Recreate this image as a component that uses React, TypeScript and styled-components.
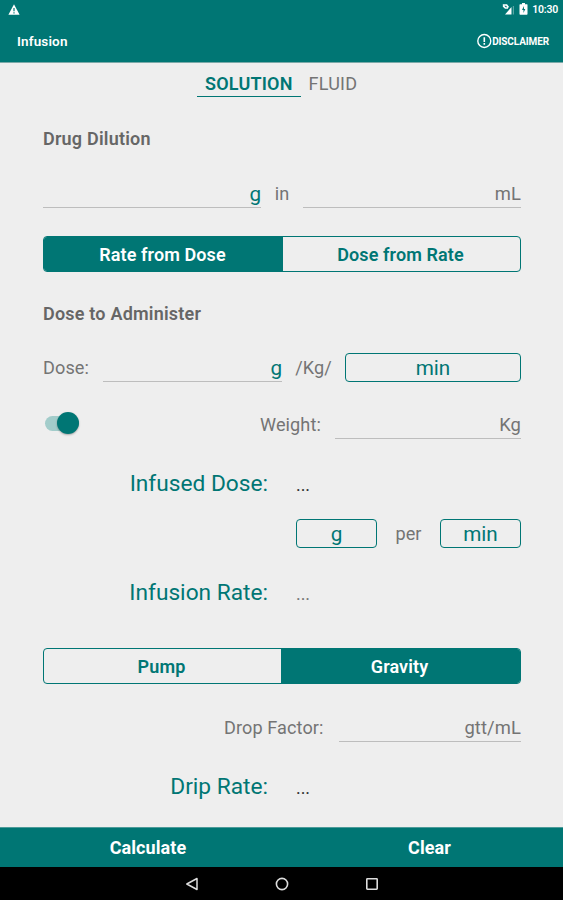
import React, { useState } from "react";
import styled, { createGlobalStyle } from "styled-components";

const TEAL = "#007674";
const GREY = "#747474";
const FONT = 'Roboto, "Liberation Sans", sans-serif';

const GlobalStyle = createGlobalStyle`
  * { box-sizing: border-box; }
  body { margin: 0; background: #eeeeee; font-family: ${FONT}; }
  button { font-family: inherit; padding: 0; margin: 0; cursor: pointer; }
`;

const Screen = styled.div`
  width: 563px;
  height: 900px;
  display: flex;
  flex-direction: column;
  background: #eeeeee;
  overflow: hidden;
  white-space: nowrap;
`;

const StatusBar = styled.div`
  height: 18px;
  flex: none;
  display: flex;
  align-items: center;
  background: ${TEAL};
  padding: 0 5px 0 8px;
  color: #fff;
`;

const StatusIcons = styled.div`
  display: flex;
  align-items: center;
  gap: 4px;
`;

const Clock = styled.span`
  font-size: 10.5px;
  font-weight: 600;
  line-height: 18px;
  margin: 2px 0 0 4px;
  letter-spacing: -0.2px;
`;

const Fill = styled.div`
  flex: 1;
`;

const AppBar = styled.header`
  height: 45px;
  flex: none;
  display: flex;
  align-items: center;
  background: ${TEAL};
  border-bottom: 1px solid #7aa9a8;
  padding: 2px 14px 0 17px;
  color: #fff;
`;

const Title = styled.h1`
  margin: 0;
  flex: 1;
  font-size: 13.5px;
  font-weight: 600;
  letter-spacing: 0.15px;
`;

const Disclaimer = styled.button`
  display: flex;
  align-items: center;
  border: 0;
  background: none;
  color: #fff;
  font-size: 10px;
  font-weight: 700;
  letter-spacing: -0.12px;
`;

const Tabs = styled.nav`
  height: 34px;
  flex: none;
  display: flex;
  padding-left: 197px;
`;

const Tab = styled.button<{ $active: boolean }>`
  border: 0;
  border-bottom: 1.5px solid ${(p) => (p.$active ? TEAL : "transparent")};
  background: none;
  padding: 9px 8px 0;
  font-size: 18px;
  line-height: 24px;
  font-weight: ${(p) => (p.$active ? 600 : 400)};
  letter-spacing: 0.2px;
  color: ${(p) => (p.$active ? TEAL : GREY)};
`;

const Form = styled.main`
  flex: 1;
  min-height: 0;
  padding: 0 42px 0 43px;
  display: flex;
  flex-direction: column;
`;

const Row = styled.div<{ $gap: number; $height?: number }>`
  display: flex;
  align-items: center;
  flex: none;
  height: ${(p) => p.$height ?? 29}px;
  margin-top: ${(p) => p.$gap}px;
`;

const Heading = styled.h2`
  margin: 0;
  font-size: 18px;
  font-weight: 600;
  letter-spacing: 0.2px;
  color: #666;
`;

const Label = styled.span<{ $width: number; $align?: string }>`
  width: ${(p) => p.$width}px;
  flex: none;
  font-size: 18.1px;
  line-height: 28px;
  letter-spacing: 0.1px;
  color: ${GREY};
  text-align: ${(p) => p.$align ?? "left"};
`;

const Field = styled.div<{ $width: number }>`
  width: ${(p) => p.$width}px;
  height: 100%;
  flex: none;
  display: flex;
  justify-content: flex-end;
  align-items: center;
  border-bottom: 1px solid #bdbdbd;
  font-size: 18.4px;
  letter-spacing: 0.1px;
  color: ${GREY};
`;

const UnitPick = styled.button`
  border: 0;
  background: none;
  font-size: 20.7px;
  line-height: 28px;
  padding-top: 2px;
  color: ${TEAL};
`;

const UnitBox = styled.button<{ $width: number }>`
  width: ${(p) => p.$width}px;
  height: 29px;
  flex: none;
  border: 1.3px solid ${TEAL};
  border-radius: 4px;
  background: none;
  padding-top: 1px;
  font-size: 20.7px;
  line-height: 24px;
  color: ${TEAL};
`;

const Segmented = styled.div<{ $gap: number; $first: number }>`
  height: 36px;
  flex: none;
  margin-top: ${(p) => p.$gap}px;
  display: grid;
  grid-template-columns: ${(p) => p.$first}px 1fr;
  border: 1px solid ${TEAL};
  border-radius: 4px;
  overflow: hidden;
`;

const Segment = styled.button<{ $on: boolean }>`
  border: 0;
  background: ${(p) => (p.$on ? TEAL : "transparent")};
  color: ${(p) => (p.$on ? "#fff" : TEAL)};
  font-size: 18px;
  font-weight: 600;
  letter-spacing: 0.1px;
  padding: 1px 2px 0 0;
`;

const SwitchTrack = styled.button<{ $on: boolean }>`
  width: 34px;
  height: 15px;
  flex: none;
  margin: -3px 0 0 2px;
  border: 0;
  border-radius: 8px;
  background: ${(p) => (p.$on ? "#a2ccca" : "#bbb")};
  display: flex;
  align-items: center;
  justify-content: ${(p) => (p.$on ? "flex-end" : "flex-start")};
`;

const SwitchThumb = styled.span`
  width: 22px;
  height: 22px;
  flex: none;
  border-radius: 50%;
  background: ${TEAL};
  box-shadow: 0 1px 2px rgba(0, 0, 0, 0.3);
`;

const ResultLabel = styled.span`
  width: 225px;
  flex: none;
  text-align: right;
  font-size: 22.7px;
  line-height: 30px;
  padding-top: 2px;
  color: ${TEAL};
`;

const ResultValue = styled.span<{ $soft?: boolean }>`
  margin-left: 28px;
  font-size: 18px;
  line-height: 30px;
  padding-top: 3px;
  letter-spacing: -0.1px;
  color: ${(p) => (p.$soft ? "#777" : "#333")};
`;

const Actions = styled.footer`
  height: 40px;
  flex: none;
  display: grid;
  grid-template-columns: 296px 1fr;
  background: ${TEAL};
  border-top: 1px solid #4d9b99;
`;

const Action = styled.button`
  border: 0;
  background: none;
  color: #fff;
  font-size: 18px;
  font-weight: 700;
  letter-spacing: 0.1px;
`;

const NavBar = styled.div`
  height: 33px;
  flex: none;
  display: flex;
  justify-content: center;
  align-items: center;
  gap: 76px;
  background: #000;
`;

const WarningIcon = () => (
  <svg width="12" height="11" viewBox="0 0 12 11">
    <path d="M6 0.3 L11.6 10.7 H0.4 Z" fill="#fff" />
    <path d="M6 4 V7.2 M6 8.2 V9.4" stroke={TEAL} strokeWidth="1.2" />
  </svg>
);

const SignalIcon = () => (
  <svg width="13" height="12" viewBox="0 0 13 12">
    <path d="M9.5 4 V11.5 H3 Z" fill="#fff" />
    <path d="M11.4 3 V11.5" stroke="#fff" strokeOpacity="0.35" strokeWidth="1.2" />
    <path d="M0.8 2 H4.6 L6.4 4.6 M1.2 2.8 L3.4 5 H6" stroke="#fff" strokeWidth="1.7" fill="none" />
  </svg>
);

const BatteryIcon = () => (
  <svg width="9" height="12" viewBox="0 0 9 12">
    <path d="M3 0 H6 V1.3 H8 Q8.5 1.3 8.5 2 V11 Q8.5 11.7 7.8 11.7 H1.2 Q0.5 11.7 0.5 11 V2 Q0.5 1.3 1 1.3 H3 Z" fill="#fff" />
    <path d="M5 3 L3 7 H4.5 V10 L6.3 6 H5 Z" fill={TEAL} />
  </svg>
);

const AlertIcon = () => (
  <svg width="15" height="16" viewBox="0 0 15 16">
    <circle cx="7.3" cy="8" r="6.5" fill="none" stroke="#fff" strokeWidth="1.4" />
    <path d="M7.3 4.2 V9 M7.3 10.1 V11.7" stroke="#fff" strokeWidth="1.6" />
  </svg>
);

const BackIcon = () => (
  <svg width="14" height="14" viewBox="0 0 14 14">
    <path d="M12 1.5 V12.5 L1.8 7 Z" fill="none" stroke="#ddd" strokeWidth="1.5" strokeLinejoin="round" />
  </svg>
);

const HomeIcon = () => (
  <svg width="14" height="14" viewBox="0 0 14 14">
    <circle cx="7" cy="7" r="5.6" fill="none" stroke="#ddd" strokeWidth="1.6" />
  </svg>
);

const RecentIcon = () => (
  <svg width="14" height="14" viewBox="0 0 14 14">
    <rect x="1.8" y="1.8" width="10.4" height="10.4" rx="0.6" fill="none" stroke="#ddd" strokeWidth="1.6" />
  </svg>
);

export default function App() {
  const [tab, setTab] = useState("SOLUTION");
  const [mode, setMode] = useState("rate");
  const [delivery, setDelivery] = useState("gravity");
  const [byWeight, setByWeight] = useState(true);

  return (
    <Screen>
      <GlobalStyle />
      <StatusBar>
        <WarningIcon />
        <Fill />
        <StatusIcons>
          <SignalIcon />
          <BatteryIcon />
        </StatusIcons>
        <Clock>10:30</Clock>
      </StatusBar>
      <AppBar>
        <Title>Infusion</Title>
        <Disclaimer>
          <AlertIcon />
          DISCLAIMER
        </Disclaimer>
      </AppBar>
      <Tabs>
        {["SOLUTION", "FLUID"].map((name) => (
          <Tab key={name} $active={tab === name} onClick={() => setTab(name)}>
            {name}
          </Tab>
        ))}
      </Tabs>
      <Form>
        <Row $gap={23} $height={36}>
          <Heading>Drug Dilution</Heading>
        </Row>
        <Row $gap={23}>
          <Field $width={218}>
            <UnitPick>g</UnitPick>
          </Field>
          <Label $width={42} $align="center">in</Label>
          <Field $width={218}>mL</Field>
        </Row>
        <Segmented $gap={28} $first={239}>
          <Segment $on={mode === "rate"} onClick={() => setMode("rate")}>Rate from Dose</Segment>
          <Segment $on={mode === "dose"} onClick={() => setMode("dose")}>Dose from Rate</Segment>
        </Segmented>
        <Row $gap={23} $height={36}>
          <Heading>Dose to Administer</Heading>
        </Row>
        <Row $gap={22}>
          <Label $width={60}>Dose:</Label>
          <Field $width={179}>
            <UnitPick>g</UnitPick>
          </Field>
          <Label $width={63} $align="center">/Kg/</Label>
          <UnitBox $width={176}>min</UnitBox>
        </Row>
        <Row $gap={28}>
          <SwitchTrack $on={byWeight} onClick={() => setByWeight(!byWeight)} aria-label="Weight">
            <SwitchThumb />
          </SwitchTrack>
          <Fill />
          <Label $width={75}>Weight:</Label>
          <Field $width={186}>Kg</Field>
        </Row>
        <Row $gap={29} $height={30}>
          <ResultLabel>Infused Dose:</ResultLabel>
          <ResultValue>...</ResultValue>
        </Row>
        <Row $gap={21}>
          <Fill />
          <UnitBox $width={81}>g</UnitBox>
          <Label $width={63} $align="center">per</Label>
          <UnitBox $width={81}>min</UnitBox>
        </Row>
        <Row $gap={29} $height={30}>
          <ResultLabel>Infusion Rate:</ResultLabel>
          <ResultValue $soft>...</ResultValue>
        </Row>
        <Segmented $gap={41} $first={237}>
          <Segment $on={delivery === "pump"} onClick={() => setDelivery("pump")}>Pump</Segment>
          <Segment $on={delivery === "gravity"} onClick={() => setDelivery("gravity")}>Gravity</Segment>
        </Segmented>
        <Row $gap={29}>
          <Fill />
          <Label $width={115}>Drop Factor:</Label>
          <Field $width={182}>gtt/mL</Field>
        </Row>
        <Row $gap={29} $height={30}>
          <ResultLabel>Drip Rate:</ResultLabel>
          <ResultValue>...</ResultValue>
        </Row>
      </Form>
      <Actions>
        <Action>Calculate</Action>
        <Action>Clear</Action>
      </Actions>
      <NavBar>
        <BackIcon />
        <HomeIcon />
        <RecentIcon />
      </NavBar>
    </Screen>
  );
}
